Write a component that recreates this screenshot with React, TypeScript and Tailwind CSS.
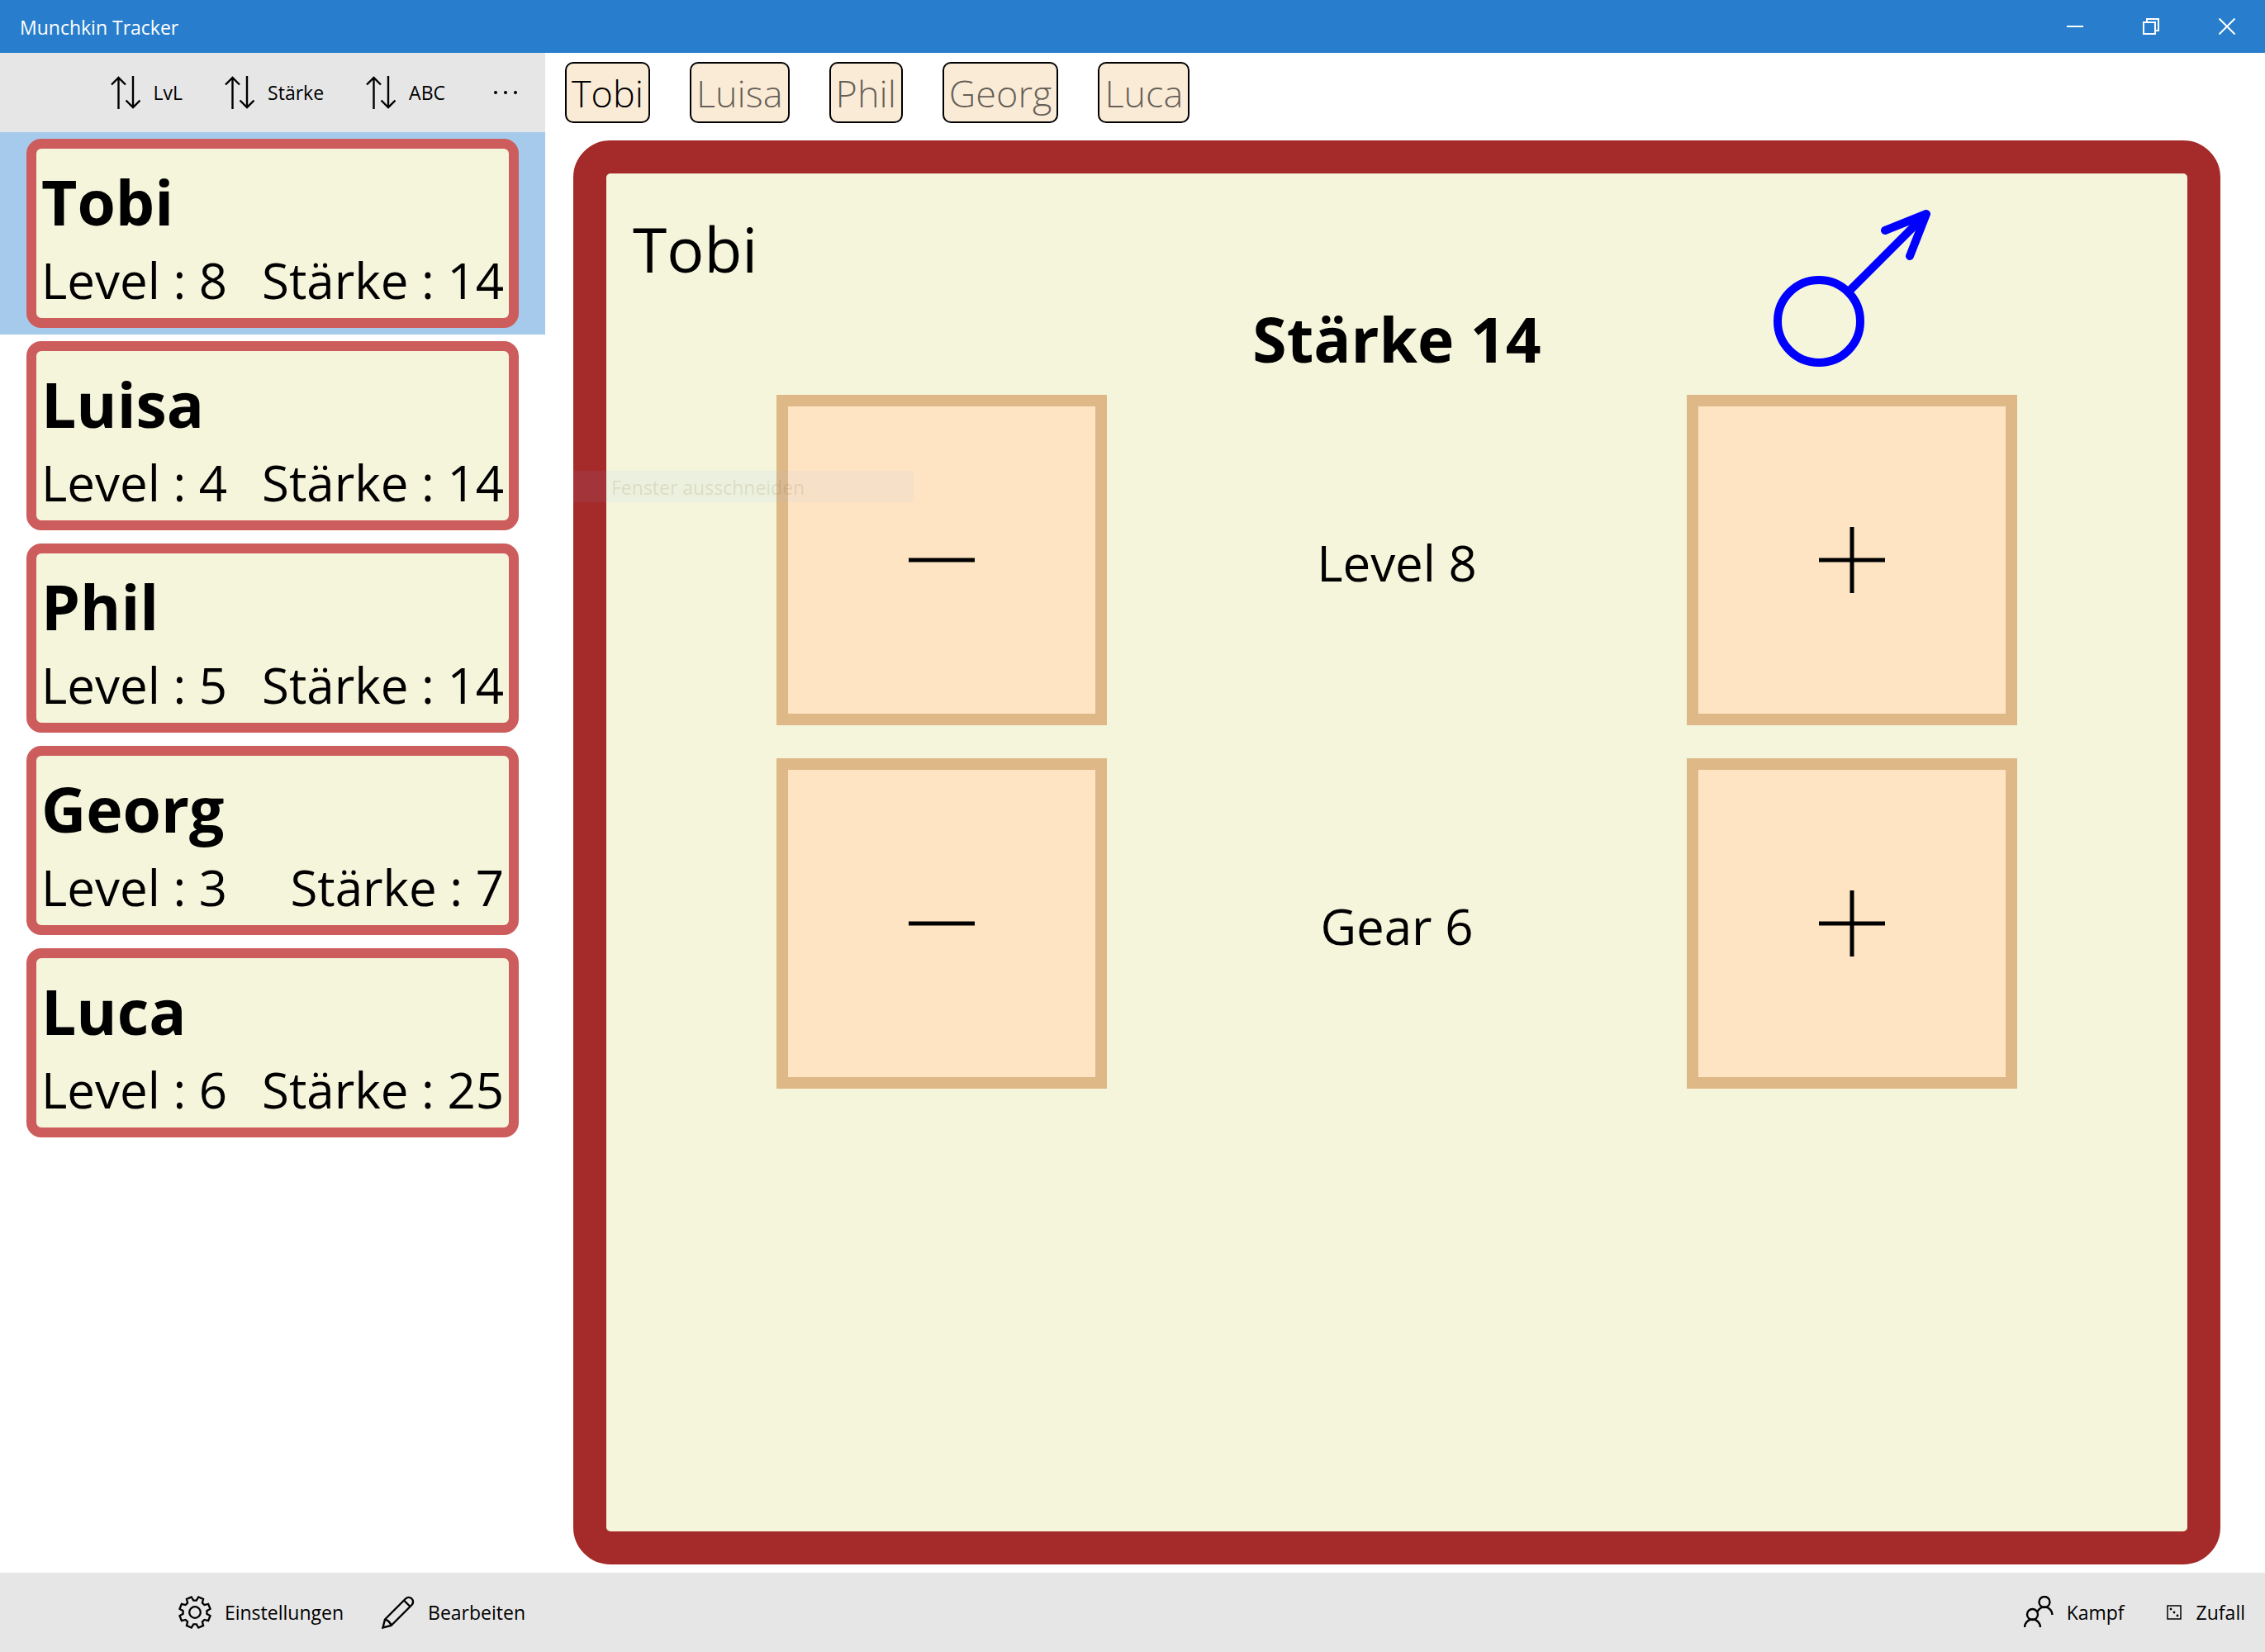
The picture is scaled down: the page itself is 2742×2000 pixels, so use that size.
import React, { useState } from "react";

const players = [
  { name: "Tobi", level: 8, strength: 14 },
  { name: "Luisa", level: 4, strength: 14 },
  { name: "Phil", level: 5, strength: 14 },
  { name: "Georg", level: 3, strength: 7 },
  { name: "Luca", level: 6, strength: 25 },
];

function SortIcon() {
  return (
    <svg className="h-10 w-9" viewBox="0 0 36 40" fill="none" stroke="black" strokeWidth="2.4" aria-hidden="true">
      <path d="M9.500 40V2M1 10.500L9.500 2l8.500 8.500M27 0v38M18.500 29.500L27 38l8.500-8.500" />
    </svg>
  );
}

function GearIcon() {
  const teeth = 8;
  const pts: string[] = [];
  for (let i = 0; i < teeth; i++) {
    const base = (i * 360) / teeth;
    for (const [off, r] of [[-13, 19], [-7, 14.5], [7, 14.5], [13, 19]] as const) {
      const a = ((base + off) * Math.PI) / 180;
      pts.push(`${(20 + r * Math.sin(a)).toFixed(2)},${(20 - r * Math.cos(a)).toFixed(2)}`);
    }
  }
  return (
    <svg className="size-10" viewBox="0 0 40 40" fill="none" stroke="black" strokeWidth="2.3" aria-hidden="true">
      <polygon points={pts.join(" ")} />
      <circle cx="20" cy="20" r="6.800" />
    </svg>
  );
}

function PencilIcon() {
  return (
    <svg className="size-10" viewBox="0 0 40 40" fill="none" stroke="black" strokeWidth="2.4" aria-hidden="true">
      <path d="M1.500 38.500L4 28.500L29 3.500a5.300 5.300 0 0 1 7.500 7.500L11.500 36zM4 28.500A11 11 0 0 1 11.500 36M27 5.500l7.500 7.500" />
    </svg>
  );
}

function PeopleIcon() {
  return (
    <svg className="h-10 w-9" viewBox="0 0 36 40" fill="none" stroke="black" strokeWidth="2.400" aria-hidden="true">
      <circle cx="25" cy="7.500" r="6.500" />
      <circle cx="10.500" cy="22.500" r="6.500" />
      <path d="M1 38a9.500 9.500 0 0 1 19 0M16 20a9.500 9.500 0 0 1 18.500 3" />
    </svg>
  );
}

function DiceIcon() {
  return (
    <svg className="size-5" viewBox="0 0 20 20" aria-hidden="true">
      <rect x="1" y="2" width="16" height="16" fill="none" stroke="black" strokeWidth="1.500" />
      <circle cx="5" cy="6" r="1.400" />
      <circle cx="9" cy="10" r="1.400" />
      <circle cx="13" cy="14" r="1.400" />
    </svg>
  );
}

function MaleIcon() {
  return (
    <svg className="size-[190px]" viewBox="0 0 190 190" fill="none" stroke="blue" strokeWidth="10" role="img" aria-label="Männlich">
      <circle cx="55" cy="135" r="50" />
      <path d="M90 100L185 5" />
      <path d="M135 25L185 5L165 56" strokeLinecap="round" strokeLinejoin="round" />
    </svg>
  );
}

function BarButton({ icon, label }: { icon: React.ReactNode; label: string }) {
  return (
    <button className="flex items-center gap-4 text-[23px]">
      {icon}
      <span>{label}</span>
    </button>
  );
}

function StepButton({ plus, label, onClick }: { plus?: boolean; label: string; onClick: () => void }) {
  return (
    <button
      aria-label={label}
      onClick={onClick}
      className="flex size-[400px] items-center justify-center border-[14px] border-[#deb887] bg-[#ffe4c4]"
    >
      <svg className="size-20" viewBox="0 0 80 80" stroke="black" strokeWidth="5" aria-hidden="true">
        <path d={plus ? "M0 40H80M40 0V80" : "M0 40H80"} />
      </svg>
    </button>
  );
}

export default function App() {
  const [selected, setSelected] = useState(0);
  const [level, setLevel] = useState(8);
  const [gear, setGear] = useState(6);
  return (
    <div className="flex min-h-screen flex-col bg-white font-['Open_Sans','Noto_Sans',sans-serif] text-black">
      <header className="flex h-16 items-center justify-between bg-[#287ecc] pl-6 text-[23px] text-white">
        <h1 className="pt-[2px]">Munchkin Tracker</h1>
        <div className="flex">
          <button aria-label="Minimieren" className="flex h-16 w-[92px] items-center justify-center">
            <svg className="size-5" viewBox="0 0 20 20" stroke="white" strokeWidth="2"><path d="M0 10h20" /></svg>
          </button>
          <button aria-label="Verkleinern" className="flex h-16 w-[92px] items-center justify-center">
            <svg className="size-5" viewBox="0 0 20 20" stroke="white" strokeWidth="2" fill="none"><path d="M1 5h14v14H1zM5 5V1h14v14h-4" /></svg>
          </button>
          <button aria-label="Schließen" className="flex h-16 w-[92px] items-center justify-center">
            <svg className="size-5" viewBox="0 0 20 20" stroke="white" strokeWidth="2"><path d="M.500.500l19 19M19.500.500l-19 19" /></svg>
          </button>
        </div>
      </header>

      <div className="flex flex-1">
        <aside className="w-[660px] shrink-0">
          <div className="flex h-24 items-center justify-end gap-[51px] bg-[#e6e6e6] pr-[34px]">
            <BarButton icon={<SortIcon />} label="LvL" />
            <BarButton icon={<SortIcon />} label="Stärke" />
            <BarButton icon={<SortIcon />} label="ABC" />
            <button aria-label="Mehr" className="ml-2">
              <svg className="h-1 w-7" viewBox="0 0 28 4" aria-hidden="true">
                <circle cx="2" cy="2" r="2" /><circle cx="14" cy="2" r="2" /><circle cx="26" cy="2" r="2" />
              </svg>
            </button>
          </div>
          <ul>
            {players.map((p, i) => (
              <li key={p.name} className={i === selected ? "bg-[#a6caeb]" : "bg-white"}>
                <button onClick={() => setSelected(i)} className="block w-full px-8 py-2 text-left">
                  <span className="block rounded-[18px] border-12 border-[#cd5c5c] bg-[#f5f5dc] px-[6px] pt-3 pb-1">
                    <span className="block text-[75px] leading-[105px] font-bold">{p.name}</span>
                    <span className="flex justify-between text-[60px] leading-[84px]">
                      <span>Level : {p.level}</span>
                      <span>Stärke : {p.strength}</span>
                    </span>
                  </span>
                </button>
              </li>
            ))}
          </ul>
        </aside>

        <main className="flex flex-1 flex-col pr-[54px] pb-[10px] pl-6">
          <nav className="flex h-[106px] items-start gap-12 pt-[11px]">
            {players.map((p, i) => (
              <button
                key={p.name}
                onClick={() => setSelected(i)}
                className="h-[74px] rounded-[10px] border-2 border-black bg-[#faebd7] px-[6px] text-[45px] leading-[72px] font-light"
              >
                <span className={i === selected ? "text-black" : "text-black/60"}>{p.name}</span>
              </button>
            ))}
          </nav>
          <section className="relative ml-[10px] flex-1 rounded-[45px] border-40 border-[#a52a2a] bg-[#f5f5dc]">
            <div className="grid h-[268px] grid-cols-3 px-[130px]">
              <h2 className="-ml-[98px] pt-[37px] text-[75px] leading-[108px]">{players[selected].name}</h2>
              <p className="pt-[146px] text-center text-[75px] leading-[108px] font-bold">Stärke {level + gear}</p>
              <div className="flex justify-center pt-11"><MaleIcon /></div>
            </div>
            <div className="grid grid-cols-3 items-center justify-items-center gap-y-10 px-[130px]">
              <StepButton label="Level verringern" onClick={() => setLevel(level - 1)} />
              <p className="pt-[6px] text-[60px]">Level {level}</p>
              <StepButton plus label="Level erhöhen" onClick={() => setLevel(level + 1)} />
              <StepButton label="Gear verringern" onClick={() => setGear(gear - 1)} />
              <p className="pt-[6px] text-[60px]">Gear {gear}</p>
              <StepButton plus label="Gear erhöhen" onClick={() => setGear(gear + 1)} />
            </div>
            <div role="tooltip" className="pointer-events-none absolute top-[360px] -left-10 flex h-[38px] w-[412px] items-center bg-[#91beff]/8 pt-[2px] pl-[46px] text-[23px] text-[#78500a]/15">
              Fenster ausschneiden
            </div>
          </section>
        </main>
      </div>

      <footer className="flex h-24 items-center justify-between bg-[#e6e6e6] pr-6">
        <div className="flex w-[660px] justify-end gap-[46px] pr-6">
          <BarButton icon={<GearIcon />} label="Einstellungen" />
          <BarButton icon={<PencilIcon />} label="Bearbeiten" />
        </div>
        <div className="flex gap-[51px]">
          <BarButton icon={<PeopleIcon />} label="Kampf" />
          <BarButton icon={<DiceIcon />} label="Zufall" />
        </div>
      </footer>
    </div>
  );
}
